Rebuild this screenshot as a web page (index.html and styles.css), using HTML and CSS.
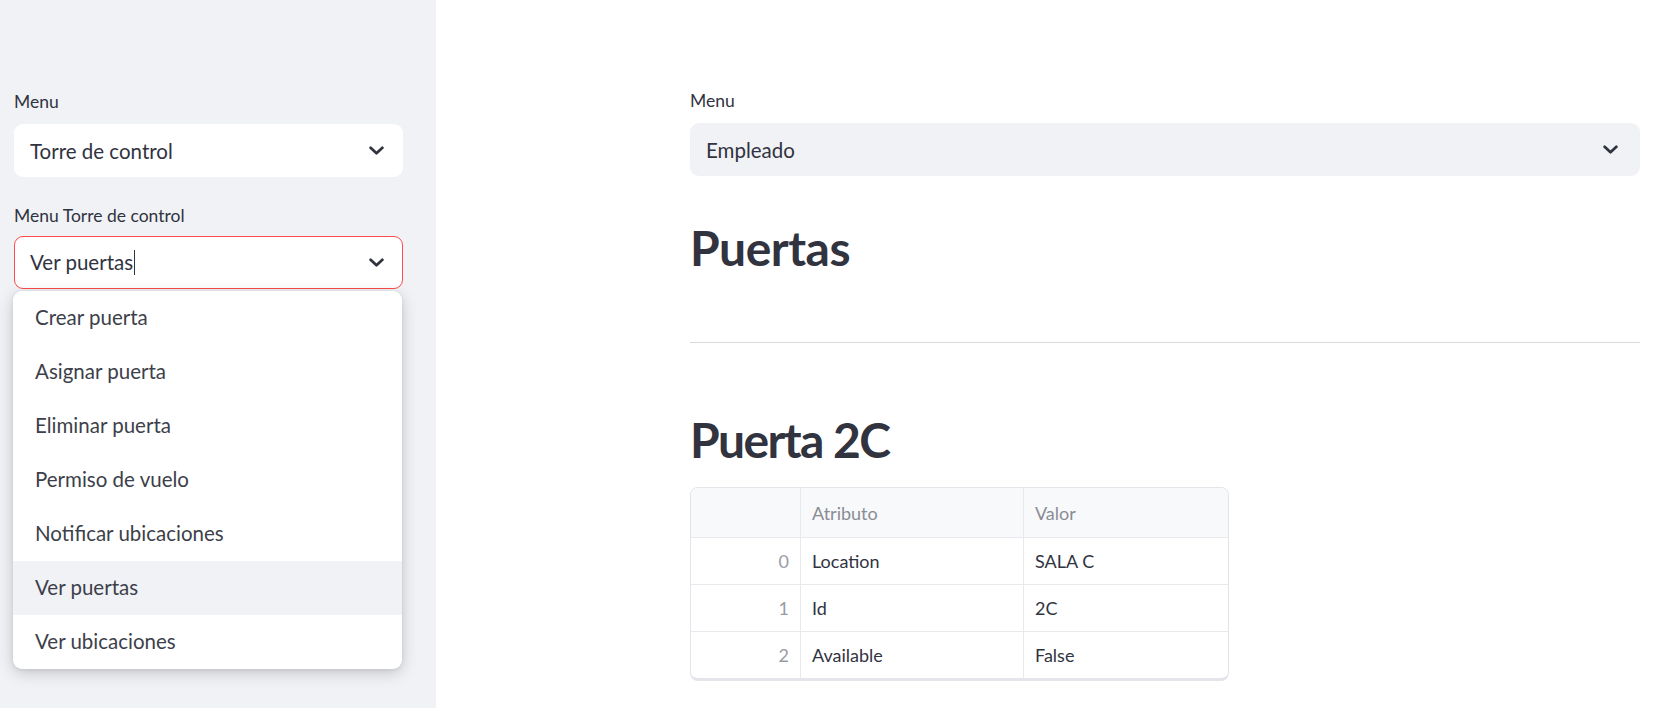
FILE: index.html
```html
<!DOCTYPE html>
<html lang="es">
<head>
    <meta charset="UTF-8">
    <meta name="viewport" content="width=device-width, initial-scale=1.0">
    <title>Torre de control</title>
    <link rel="stylesheet" href="styles.css">
</head>
<body>
    <aside class="sidebar">
        <label class="field-label">Menu</label>
        <div class="select select-white">
            <span>Torre de control</span>
            <svg class="chevron" viewBox="0 0 14 8"><path d="M1.5 1.5 L7 6.5 L12.5 1.5"/></svg>
        </div>

        <label class="field-label second">Menu Torre de control</label>
        <div class="select-wrap">
            <div class="select select-white select-open">
                <span>Ver puertas<i class="caret"></i></span>
                <svg class="chevron" viewBox="0 0 14 8"><path d="M1.5 1.5 L7 6.5 L12.5 1.5"/></svg>
            </div>
            <ul class="dropdown">
                <li>Crear puerta</li>
                <li>Asignar puerta</li>
                <li>Eliminar puerta</li>
                <li>Permiso de vuelo</li>
                <li>Notificar ubicaciones</li>
                <li class="active">Ver puertas</li>
                <li>Ver ubicaciones</li>
            </ul>
        </div>
    </aside>

    <main class="main">
        <label class="field-label">Menu</label>
        <div class="select select-grey">
            <span>Empleado</span>
            <svg class="chevron" viewBox="0 0 14 8"><path d="M1.5 1.5 L7 6.5 L12.5 1.5"/></svg>
        </div>

        <h1 class="title">Puertas</h1>
        <hr class="divider">
        <h1 class="title title-small">Puerta 2C</h1>

        <table class="data">
            <colgroup>
                <col class="col-idx">
                <col class="col-attr">
                <col>
            </colgroup>
            <thead>
                <tr><th class="idx"></th><th>Atributo</th><th>Valor</th></tr>
            </thead>
            <tbody>
                <tr><td class="idx">0</td><td>Location</td><td>SALA C</td></tr>
                <tr><td class="idx">1</td><td>Id</td><td>2C</td></tr>
                <tr><td class="idx">2</td><td>Available</td><td>False</td></tr>
            </tbody>
        </table>
    </main>
</body>
</html>
```

FILE: styles.css
```css
body {
    margin: 0;
    display: flex;
    min-height: 708px;
    font-family: Lato, "Noto Sans", sans-serif;
    color: #31333f;
    background: #ffffff;
    overflow: hidden;
}
.sidebar {
    width: 436px;
    flex-shrink: 0;
    background: #f0f2f6;
    padding: 88px 33px 0 14px;
    box-sizing: border-box;
    height: 708px;
}
.main {
    flex: 1;
    padding: 87px 22px 0 254px;
}
.field-label {
    display: block;
    font-size: 17.5px;
    line-height: 28px;
    margin-bottom: 8px;
}
.field-label.second {
    margin-top: 25px;
    margin-bottom: 6px;
}
.select {
    display: flex;
    align-items: center;
    justify-content: space-between;
    height: 53px;
    box-sizing: border-box;
    padding: 0 18px 0 15px;
    border-radius: 9px;
    font-size: 20.5px;
    border: 1px solid transparent;
}
.select-white {
    background: #ffffff;
}
.select-grey {
    background: #f0f2f6;
    padding-right: 21px;
}
.select-open {
    border-color: #ff4b4b;
}
.chevron {
    width: 15px;
    height: 9px;
    fill: none;
    stroke: #31333f;
    stroke-width: 2.6;
    stroke-linecap: round;
    stroke-linejoin: round;
}
.caret {
    display: inline-block;
    width: 1px;
    height: 25px;
    background: #31333f;
    vertical-align: middle;
    margin-left: 1px;
    margin-top: -3px;
}
.select-wrap {
    position: relative;
}
.dropdown {
    position: absolute;
    top: 55px;
    left: -1px;
    right: 1px;
    margin: 0;
    padding: 0;
    list-style: none;
    background: #ffffff;
    border-radius: 9px;
    box-shadow: 0 4px 16px rgba(0, 0, 0, 0.18), 0 1px 4px rgba(0, 0, 0, 0.08);
    overflow: hidden;
}
.dropdown li {
    height: 54px;
    line-height: 52px;
    padding-left: 22px;
    font-size: 20.5px;
    color: #3d3f4a;
}
.dropdown li.active {
    background: #f0f2f6;
}
.title {
    margin: 40px 0 0 0;
    font-size: 48px;
    font-weight: 700;
    line-height: 64px;
    letter-spacing: -0.5px;
}
.divider {
    border: none;
    border-top: 1px solid #d9dade;
    margin: 62px 0 0;
}
.title-small {
    margin-top: 65px;
    letter-spacing: -1.6px;
}
.data {
    margin-top: 15px;
    width: 539px;
    table-layout: fixed;
    border-collapse: separate;
    border-spacing: 0;
    border: 1px solid #e4e5ea;
    border-bottom-width: 3px;
    border-radius: 8px;
    overflow: hidden;
    font-size: 18px;
}
.col-idx {
    width: 110px;
}
.col-attr {
    width: 223px;
}
.data th,
.data td {
    height: 46px;
    padding: 0 11px;
    text-align: left;
    border-right: 1px solid #e8e9ed;
    border-bottom: 1px solid #e8e9ed;
    font-weight: 400;
}
.data th {
    background: #f8f9fb;
    color: #8a8c94;
    height: 49px;
}
.data tr th:last-child,
.data tr td:last-child {
    border-right: none;
}
.data tbody tr:last-child td {
    border-bottom: none;
}
.data .idx {
    text-align: right;
    padding-right: 11px;
    color: #9a9ca3;
}
```
